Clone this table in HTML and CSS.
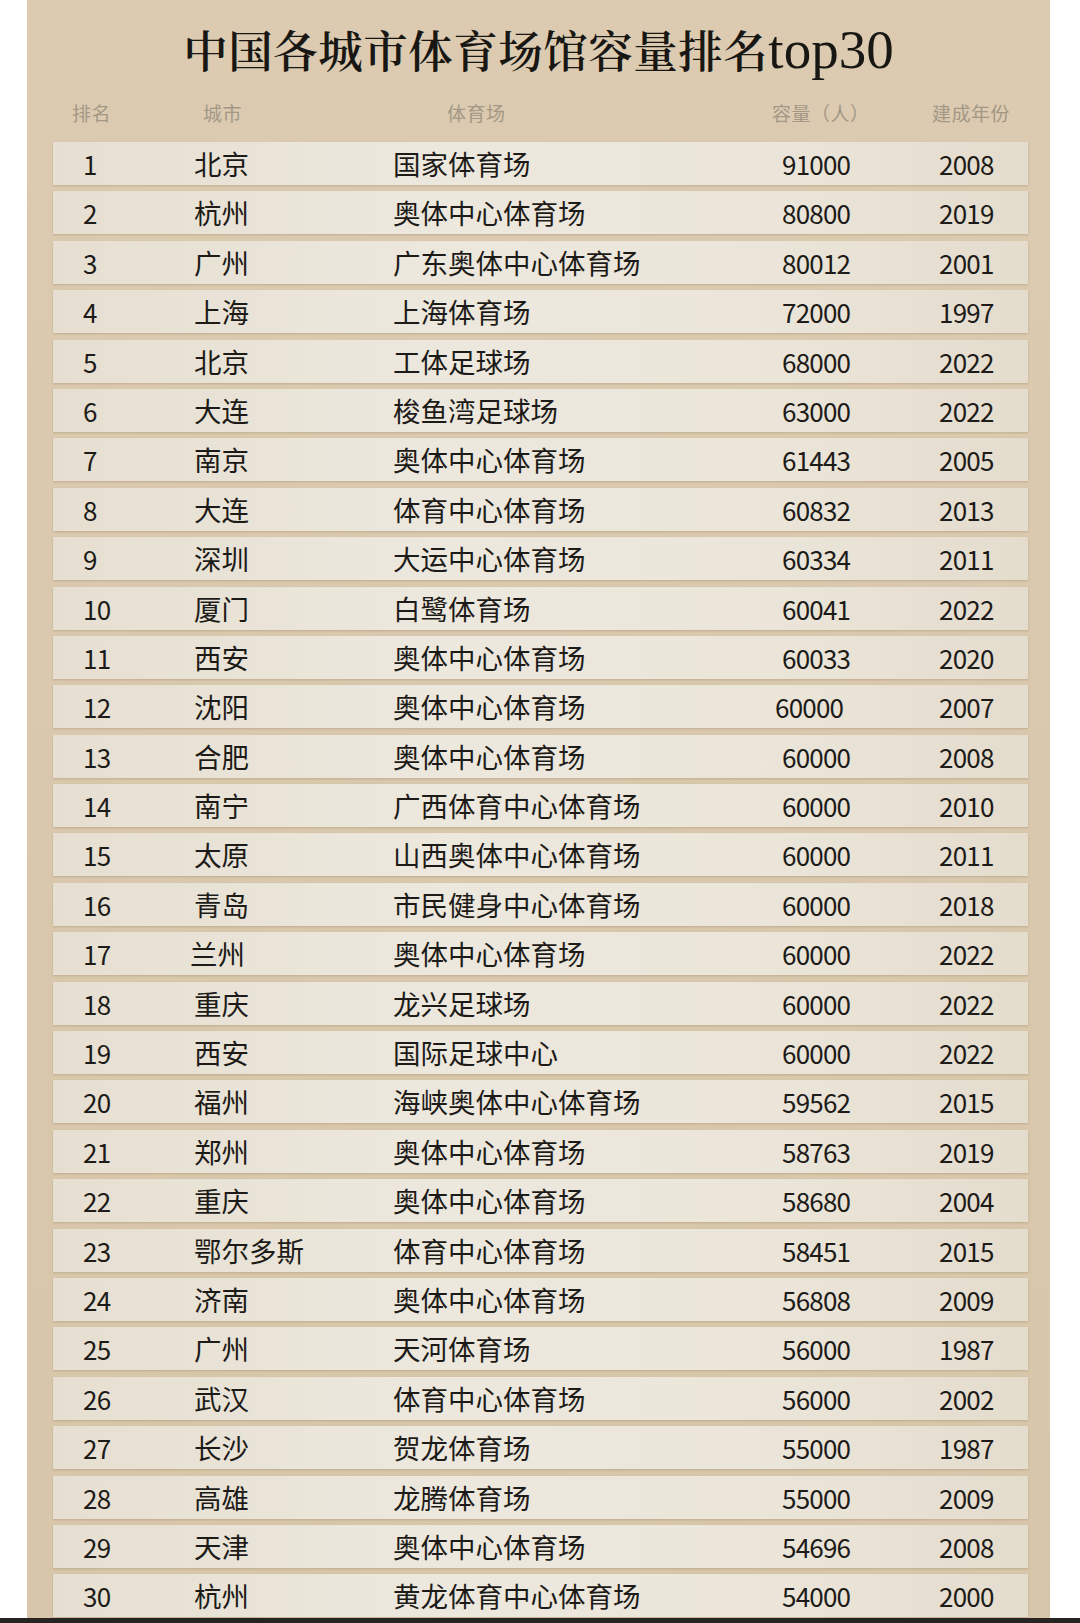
FILE: index.html
```html
<!DOCTYPE html>
<html lang="zh-CN">
<head>
<meta charset="utf-8">
<title>中国各城市体育场馆容量排名top30</title>
<link rel="stylesheet" href="styles.css">
</head>
<body>
<div class="page">
  <div class="panel">
    <h1 class="title">中国各城市体育场馆容量排名<span class="latin">top30</span></h1>
    <div class="head">
      <span>排名</span><span>城市</span><span>体育场</span><span>容量（人）</span><span>建成年份</span>
    </div>
    <div class="rows">
      <div class="row"><span class="rank">1</span><span>北京</span><span>国家体育场</span><span class="num">91000</span><span class="num">2008</span></div>
      <div class="row"><span class="rank">2</span><span>杭州</span><span>奥体中心体育场</span><span class="num">80800</span><span class="num">2019</span></div>
      <div class="row"><span class="rank">3</span><span>广州</span><span>广东奥体中心体育场</span><span class="num">80012</span><span class="num">2001</span></div>
      <div class="row"><span class="rank">4</span><span>上海</span><span>上海体育场</span><span class="num">72000</span><span class="num">1997</span></div>
      <div class="row"><span class="rank">5</span><span>北京</span><span>工体足球场</span><span class="num">68000</span><span class="num">2022</span></div>
      <div class="row"><span class="rank">6</span><span>大连</span><span>梭鱼湾足球场</span><span class="num">63000</span><span class="num">2022</span></div>
      <div class="row"><span class="rank">7</span><span>南京</span><span>奥体中心体育场</span><span class="num">61443</span><span class="num">2005</span></div>
      <div class="row"><span class="rank">8</span><span>大连</span><span>体育中心体育场</span><span class="num">60832</span><span class="num">2013</span></div>
      <div class="row"><span class="rank">9</span><span>深圳</span><span>大运中心体育场</span><span class="num">60334</span><span class="num">2011</span></div>
      <div class="row"><span class="rank">10</span><span>厦门</span><span>白鹭体育场</span><span class="num">60041</span><span class="num">2022</span></div>
      <div class="row"><span class="rank">11</span><span>西安</span><span>奥体中心体育场</span><span class="num">60033</span><span class="num">2020</span></div>
      <div class="row"><span class="rank">12</span><span>沈阳</span><span>奥体中心体育场</span><span class="num shift">60000</span><span class="num">2007</span></div>
      <div class="row"><span class="rank">13</span><span>合肥</span><span>奥体中心体育场</span><span class="num">60000</span><span class="num">2008</span></div>
      <div class="row"><span class="rank">14</span><span>南宁</span><span>广西体育中心体育场</span><span class="num">60000</span><span class="num">2010</span></div>
      <div class="row"><span class="rank">15</span><span>太原</span><span>山西奥体中心体育场</span><span class="num">60000</span><span class="num">2011</span></div>
      <div class="row"><span class="rank">16</span><span>青岛</span><span>市民健身中心体育场</span><span class="num">60000</span><span class="num">2018</span></div>
      <div class="row"><span class="rank">17</span><span class="shift-sm">兰州</span><span>奥体中心体育场</span><span class="num">60000</span><span class="num">2022</span></div>
      <div class="row"><span class="rank">18</span><span>重庆</span><span>龙兴足球场</span><span class="num">60000</span><span class="num">2022</span></div>
      <div class="row"><span class="rank">19</span><span>西安</span><span>国际足球中心</span><span class="num">60000</span><span class="num">2022</span></div>
      <div class="row"><span class="rank">20</span><span>福州</span><span>海峡奥体中心体育场</span><span class="num">59562</span><span class="num">2015</span></div>
      <div class="row"><span class="rank">21</span><span>郑州</span><span>奥体中心体育场</span><span class="num">58763</span><span class="num">2019</span></div>
      <div class="row"><span class="rank">22</span><span>重庆</span><span>奥体中心体育场</span><span class="num">58680</span><span class="num">2004</span></div>
      <div class="row"><span class="rank">23</span><span>鄂尔多斯</span><span>体育中心体育场</span><span class="num">58451</span><span class="num">2015</span></div>
      <div class="row"><span class="rank">24</span><span>济南</span><span>奥体中心体育场</span><span class="num">56808</span><span class="num">2009</span></div>
      <div class="row"><span class="rank">25</span><span>广州</span><span>天河体育场</span><span class="num">56000</span><span class="num">1987</span></div>
      <div class="row"><span class="rank">26</span><span>武汉</span><span>体育中心体育场</span><span class="num">56000</span><span class="num">2002</span></div>
      <div class="row"><span class="rank">27</span><span>长沙</span><span>贺龙体育场</span><span class="num">55000</span><span class="num">1987</span></div>
      <div class="row"><span class="rank">28</span><span>高雄</span><span>龙腾体育场</span><span class="num">55000</span><span class="num">2009</span></div>
      <div class="row"><span class="rank">29</span><span>天津</span><span>奥体中心体育场</span><span class="num">54696</span><span class="num">2008</span></div>
      <div class="row"><span class="rank">30</span><span>杭州</span><span>黄龙体育中心体育场</span><span class="num">54000</span><span class="num">2000</span></div>
    </div>
  </div>
  <div class="bottom-bar"></div>
</div>
</body>
</html>
```

FILE: styles.css
```css
html, body {
  margin: 0;
  padding: 0;
  background: #ffffff;
}

.page {
  width: 1080px;
  height: 1623px;
  overflow: hidden;
  display: flex;
  flex-direction: column;
}

.panel {
  margin-left: 27px;
  width: 1023px;
  height: 1618px;
  background: linear-gradient(180deg, #dccbb1 0%, #d9c8ad 50%, #d8c6aa 100%);
  display: flex;
  flex-direction: column;
  font-family: "Noto Sans CJK SC", "Noto Sans", sans-serif;
  color: #1d1b18;
}

.title {
  margin: 0;
  padding-top: 20px;
  height: 60px;
  line-height: 58px;
  text-align: center;
  font-family: "Noto Serif CJK SC", "Noto Sans CJK SC", serif;
  font-size: 44.5px;
  font-weight: 600;
  letter-spacing: 0.5px;
  color: #191714;
}

.title .latin {
  font-family: "Liberation Serif", "DejaVu Serif", serif;
  font-size: 55px;
  font-weight: 400;
  letter-spacing: 0;
}

.head {
  display: grid;
  grid-template-columns: 131px 244px 325px 160px 1fr;
  padding-left: 45px;
  padding-top: 4px;
  height: 58px;
  line-height: 58px;
  font-size: 19px;
  color: #a39886;
  letter-spacing: 0.5px;
}

.rows {
  display: flex;
  flex-direction: column;
  gap: 6.4px;
  padding-left: 26px;
  padding-right: 22px;
}

.row {
  display: grid;
  grid-template-columns: 111px 199px 389px 157px 1fr;
  padding-left: 30px;
  height: 43px;
  line-height: 43px;
  font-size: 27.5px;
  background: linear-gradient(90deg, #e6dfd1 0%, #ede8de 40%, #ebe5d9 75%, #e4dccd 100%);
  box-shadow: 0 1px 2px rgba(130, 100, 60, 0.28);
}

.rank,
.num {
  font-size: 26px;
  letter-spacing: -0.8px;
}

.shift {
  margin-left: -7px;
}

.shift-sm {
  margin-left: -4px;
}

.bottom-bar {
  height: 5px;
  background: #262422;
}
```
